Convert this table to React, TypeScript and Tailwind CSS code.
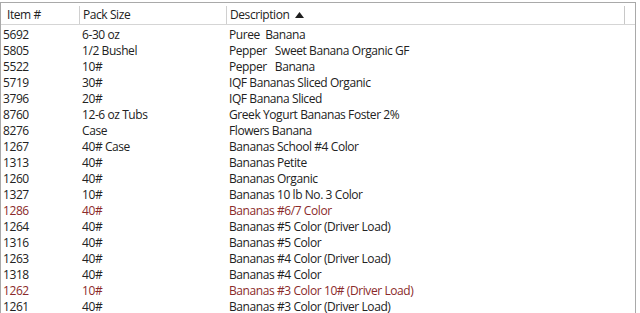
import React from "react";

type Row = { id: string; pack: string; desc: string; red?: boolean };

const rows: Row[] = [
  { id: "5692", pack: "6-30 oz", desc: "Puree  Banana" },
  { id: "5805", pack: "1/2 Bushel", desc: "Pepper   Sweet Banana Organic GF" },
  { id: "5522", pack: "10#", desc: "Pepper   Banana" },
  { id: "5719", pack: "30#", desc: "IQF Bananas Sliced Organic" },
  { id: "3796", pack: "20#", desc: "IQF Banana Sliced" },
  { id: "8760", pack: "12-6 oz Tubs", desc: "Greek Yogurt Bananas Foster 2%" },
  { id: "8276", pack: "Case", desc: "Flowers Banana" },
  { id: "1267", pack: "40# Case", desc: "Bananas School #4 Color" },
  { id: "1313", pack: "40#", desc: "Bananas Petite" },
  { id: "1260", pack: "40#", desc: "Bananas Organic" },
  { id: "1327", pack: "10#", desc: "Bananas 10 lb No. 3 Color" },
  { id: "1286", pack: "40#", desc: "Bananas #6/7 Color", red: true },
  { id: "1264", pack: "40#", desc: "Bananas #5 Color (Driver Load)" },
  { id: "1316", pack: "40#", desc: "Bananas #5 Color" },
  { id: "1263", pack: "40#", desc: "Bananas #4 Color (Driver Load)" },
  { id: "1318", pack: "40#", desc: "Bananas #4 Color" },
  { id: "1262", pack: "10#", desc: "Bananas #3 Color 10# (Driver Load)", red: true },
  { id: "1261", pack: "40#", desc: "Bananas #3 Color (Driver Load)" },
];

export default function App() {
  return (
    <div
      className="w-[640px] h-[313px] bg-white overflow-hidden pt-[2px]"
      style={{ fontFamily: '"Open Sans", "Noto Sans", sans-serif' }}
    >
      <div className="w-[636px] h-[311px] border-l border-t border-r border-[#a9a9a9] text-[12px] leading-[16px] text-[#222222] tracking-[-0.42px]">
        <div className="flex h-[22px] items-center pt-[3px] border-b border-[#d5d5d5]">
          <div className="w-[78px] pl-[6px]">Item #</div>
          <div className="w-px h-[18px] bg-[#d0d0d0]" />
          <div className="w-[146px] pl-[3px]">Pack Size</div>
          <div className="w-px h-[18px] bg-[#d0d0d0]" />
          <div className="flex-1 pl-[3px] flex items-center gap-[6px]">
            <span>Description</span>
            <svg width="9" height="6" viewBox="0 0 9 6">
              <path d="M0 6 L4.5 0 L9 6 Z" fill="#1e1e1e" />
            </svg>
          </div>
          <div className="w-px h-[18px] bg-[#c8c8c8] mr-[10px]" />
        </div>
        <div className="pt-[2px]">
          {rows.map((r) => (
            <div
              key={r.id}
              className={`flex h-[16px] items-center ${r.red ? "text-[#8a2a2a]" : ""}`}
            >
              <div className="w-[79px] pl-[2px]">{r.id}</div>
              <div className="w-[147px] pl-[2px]">{r.pack}</div>
              <div className="flex-1 pl-[2px] whitespace-pre">{r.desc}</div>
            </div>
          ))}
        </div>
      </div>
    </div>
  );
}
